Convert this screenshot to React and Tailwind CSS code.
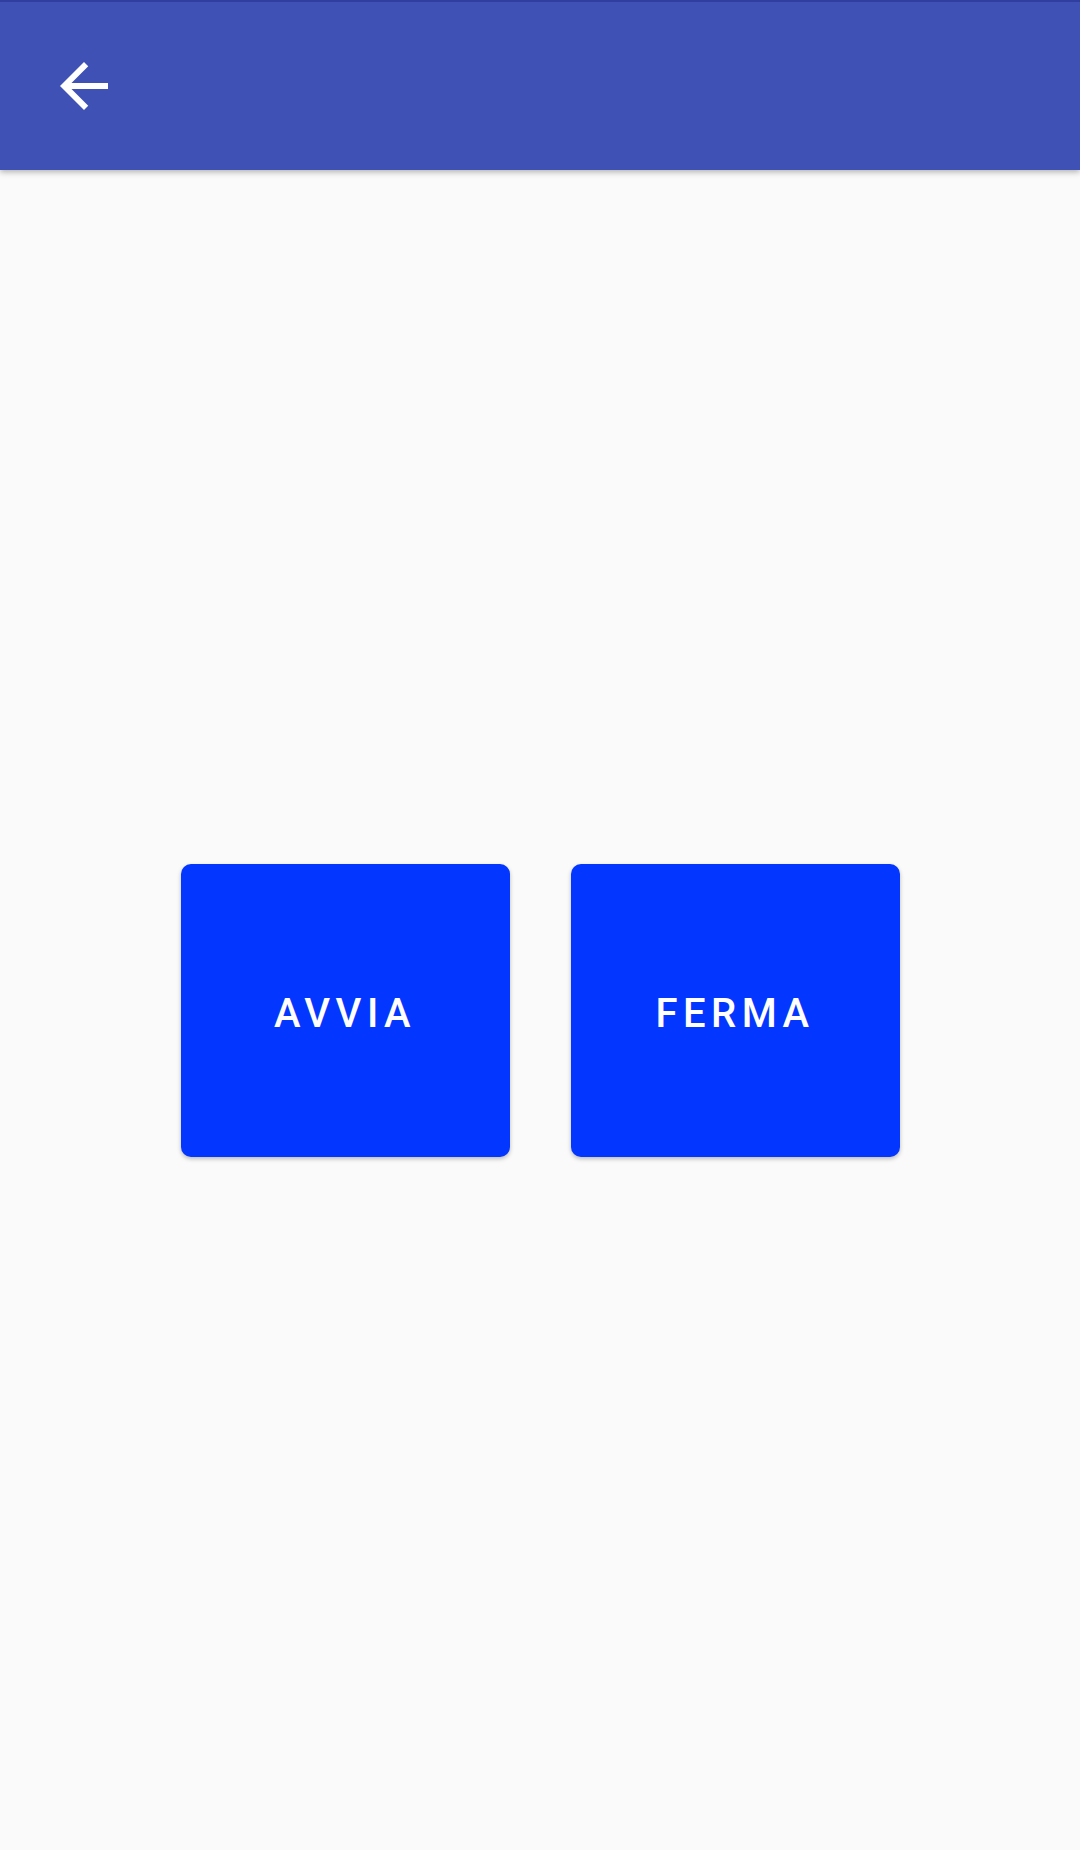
export default function App() {
  return (
    <div className="w-[1080px] h-[1850px] bg-[#fafafa] flex flex-col" style={{ fontFamily: "Roboto, 'Noto Sans', sans-serif" }}>
      <div className="h-[170px] shrink-0 bg-[#3f51b5] border-t-2 border-[#303f9f] shadow-[0_2px_6px_rgba(0,0,0,0.3)] flex items-center pl-[48px] relative z-10">
        <svg width="72" height="72" viewBox="0 0 24 24" fill="#ffffff">
          <path d="M20 11H7.83l5.59-5.59L12 4l-8 8 8 8 1.41-1.41L7.83 13H20v-2z" />
        </svg>
      </div>
      <div className="flex-1 flex items-center justify-center gap-[61px]">
        <button className="w-[329px] h-[293px] bg-[#0336ff] rounded-[10px] shadow-[0_2px_4px_rgba(0,0,0,0.25)] text-white text-[40px] font-medium tracking-[5.5px] pt-[7px] flex items-center justify-center">
          AVVIA
        </button>
        <button className="w-[329px] h-[293px] bg-[#0336ff] rounded-[10px] shadow-[0_2px_4px_rgba(0,0,0,0.25)] text-white text-[40px] font-medium tracking-[5.5px] pt-[7px] flex items-center justify-center">
          FERMA
        </button>
      </div>
    </div>
  );
}
